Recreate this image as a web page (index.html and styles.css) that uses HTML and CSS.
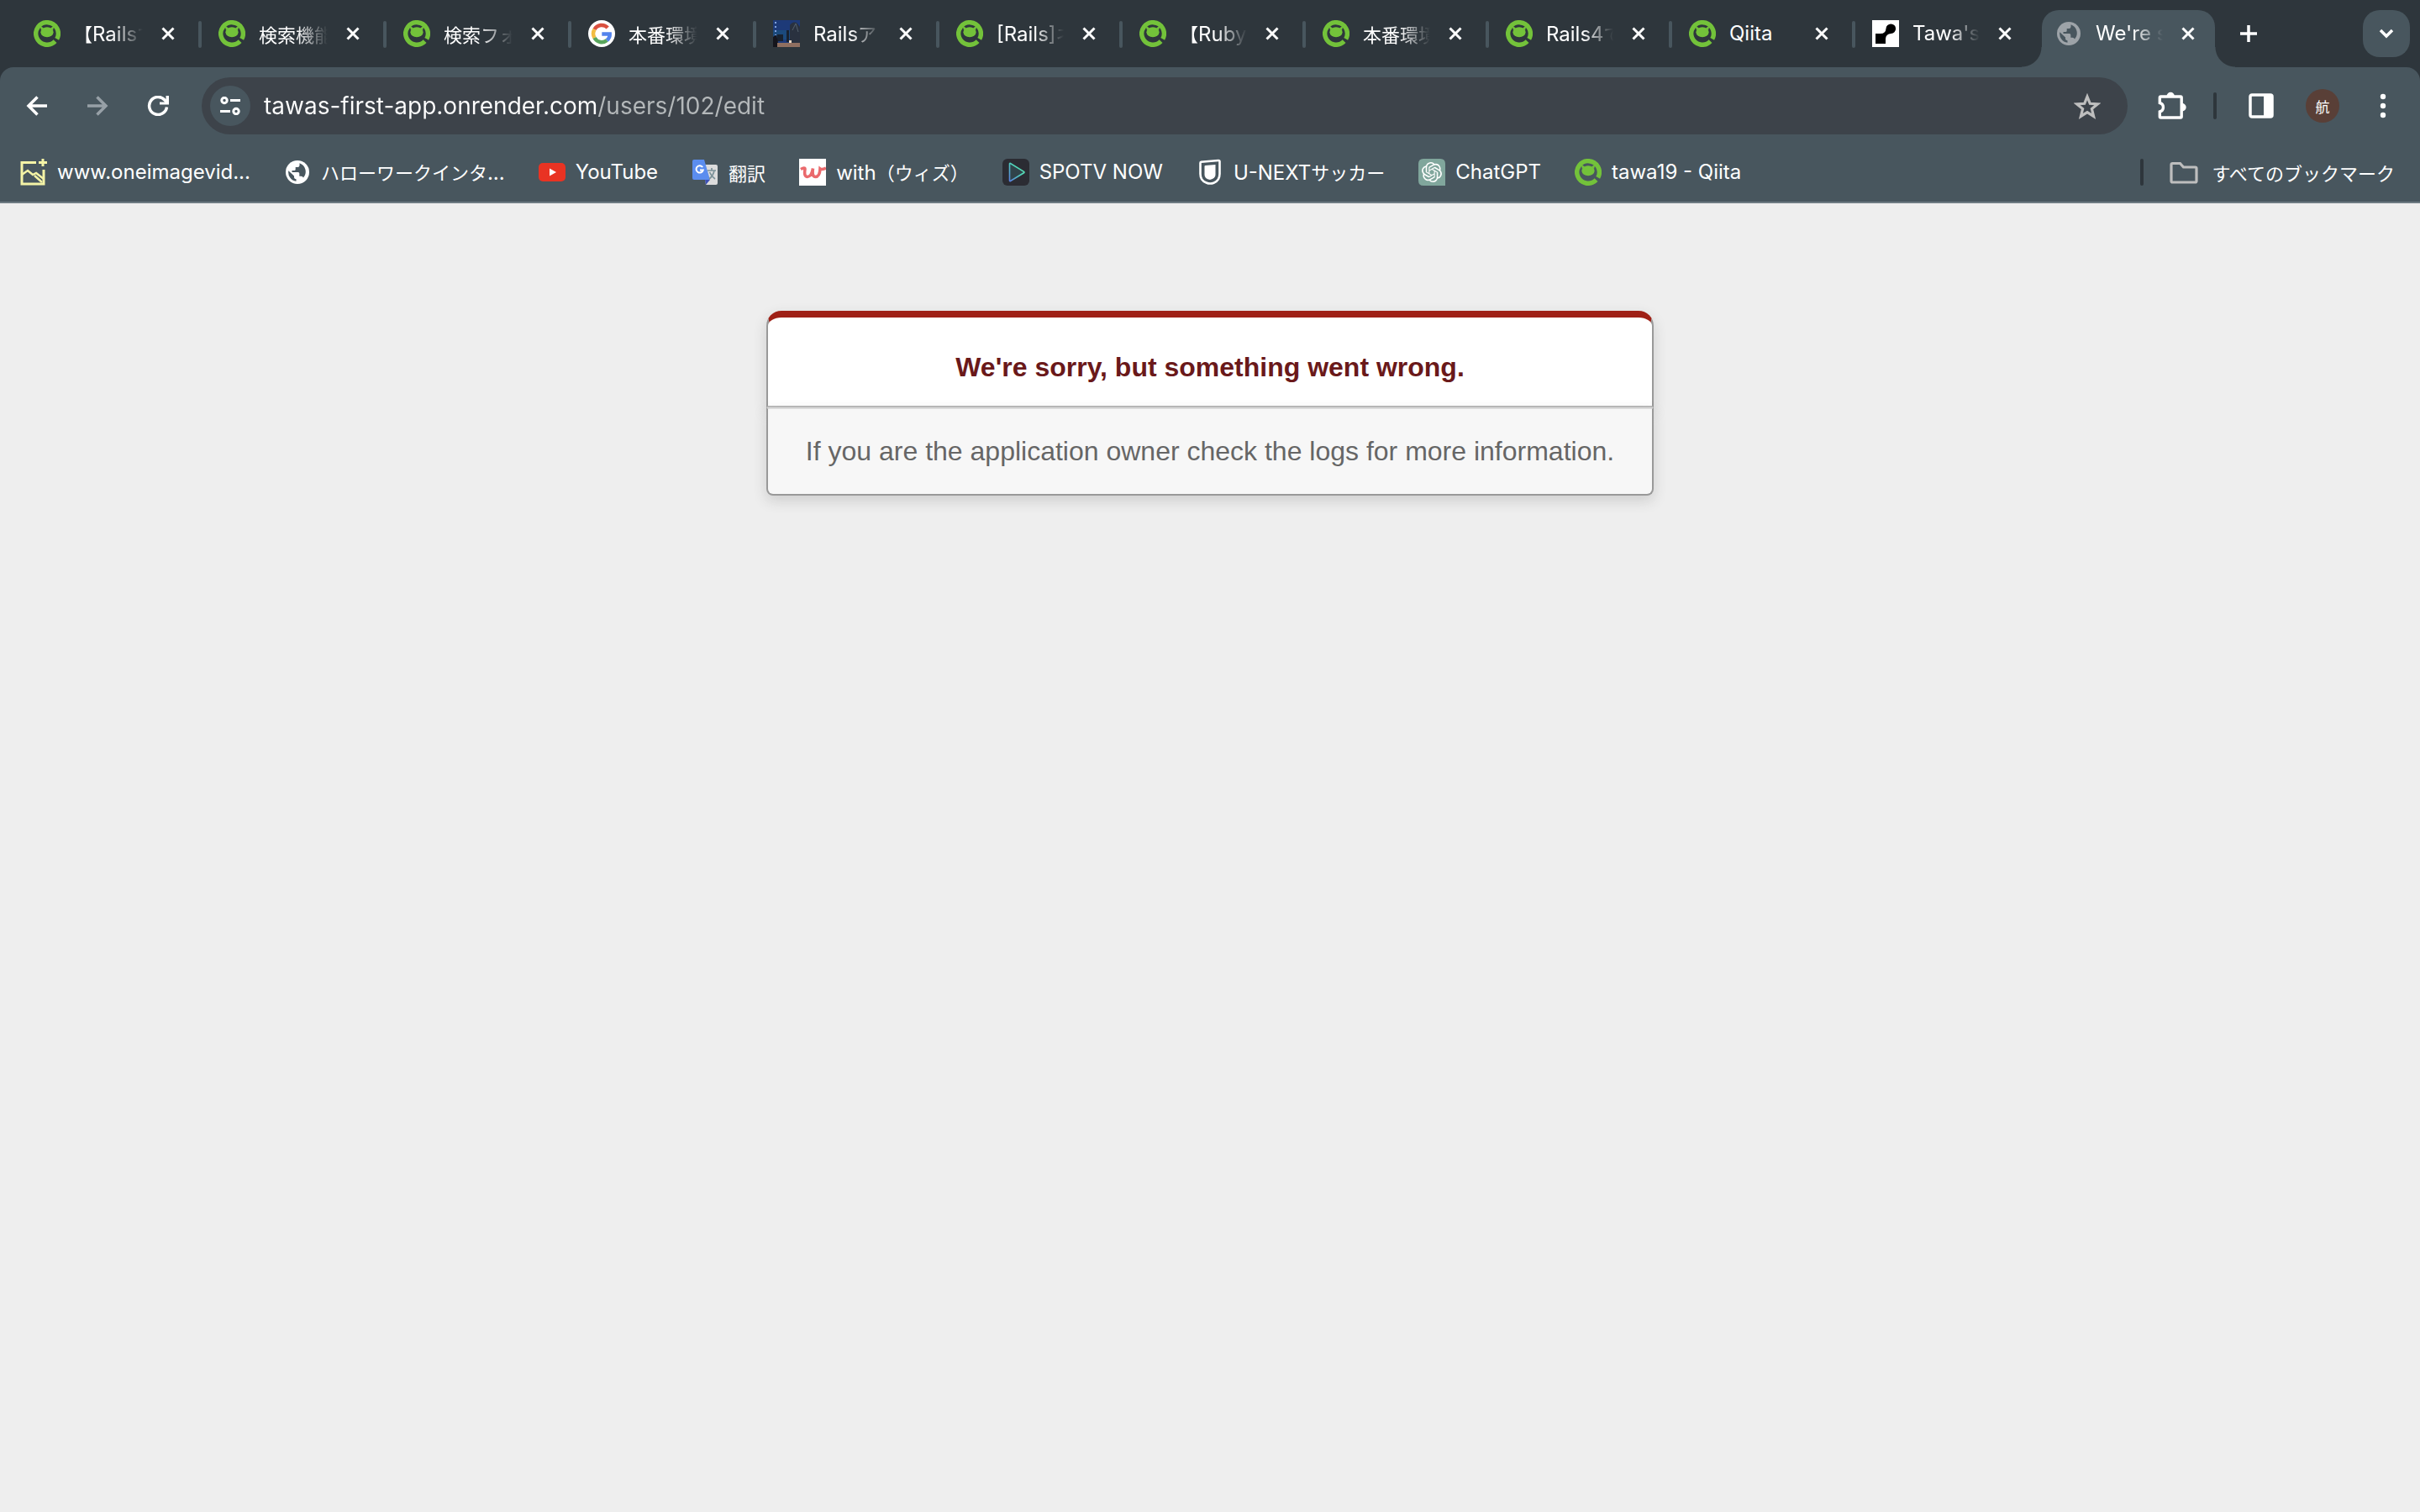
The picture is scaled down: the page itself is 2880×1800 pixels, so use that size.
FILE: index.html
```html
<!DOCTYPE html>
<html lang="en">
<head>
<meta charset="UTF-8">
<meta name="viewport" content="width=device-width, initial-scale=1">
<title>We're sorry, but something went wrong (500)</title>
<link rel="stylesheet" href="styles.css">
</head>
<body>

<svg class="defs" aria-hidden="true">
  <linearGradient id="spotv-line" x1="0" y1="1" x2="1" y2="0">
    <stop offset="0" stop-color="#5b7fe0"/><stop offset=".6" stop-color="#4fd8b8"/><stop offset="1" stop-color="#6be8b0"/>
  </linearGradient>
  <symbol id="qiita" viewBox="0 0 32 32">
    <path d="M27.700 22.350A13.300 13.300 0 1 0 25.600 25.200" fill="none" stroke="#73c23a" stroke-width="5.400"/>
    <ellipse cx="16" cy="14.200" rx="7.600" ry="6" fill="#73c23a"/>
    <path d="M7.500 6.500l4.500 3-3 2.500zM24.500 6.500l-4.500 3 3 2.500z" fill="#73c23a"/>
  </symbol>
  <symbol id="close" viewBox="0 0 16 16"><path d="M1.500 1.500l13 13m0-13l-13 13" stroke="#fff" stroke-width="3"/></symbol>
  <symbol id="globe" viewBox="0 0 28 28">
    <circle cx="14" cy="14" r="14" fill="currentColor"/>
    <path class="land" d="M16.500 3.200v2.600q0 2.200-2.200 2.200h-2.600v2.500q0 1.500-1.500 1.500H7.500v2h7.300q1.500 0 1.500 1.600v3.200h2q2 0 2.700 1.800a10.800 10.800 0 0 0-4.500-17.400zM3.300 12.200a10.800 10.800 0 0 0 9.200 12.500v-2.500q-2.500 0-2.500-2.600v-1.200z"/>
  </symbol>
</svg>

<header class="browser">
  <div class="tab-strip">
    <div class="tab"><button class="tab-main"><svg class="icon"><use href="#qiita"/></svg><span class="tab-title"><span lang="ja">【</span>Rails<span lang="ja">で</span></span></button><button class="close" aria-label="Close"><svg><use href="#close"/></svg></button></div>
    <div class="tab"><button class="tab-main"><svg class="icon"><use href="#qiita"/></svg><span class="tab-title" lang="ja">検索機能</span></button><button class="close" aria-label="Close"><svg><use href="#close"/></svg></button></div>
    <div class="tab"><button class="tab-main"><svg class="icon"><use href="#qiita"/></svg><span class="tab-title" lang="ja">検索フォ</span></button><button class="close" aria-label="Close"><svg><use href="#close"/></svg></button></div>
    <div class="tab"><button class="tab-main"><svg class="icon" viewBox="0 0 32 32"><circle cx="16" cy="16" r="16" fill="#fff"/><g fill="none" stroke-width="4.500"><path d="M23.200 9A9.800 9.800 0 0 0 7.500 11" stroke="#d9503f"/><path d="M7.500 11a9.800 9.800 0 0 0 0 10" stroke="#f2bd42"/><path d="M7.500 21a9.800 9.800 0 0 0 14.800 3" stroke="#58a55c"/><path d="M22.300 24q3.700-3 3.400-7.500H16.300" stroke="#5383ec"/></g></svg><span class="tab-title" lang="ja">本番環境</span></button><button class="close" aria-label="Close"><svg><use href="#close"/></svg></button></div>
    <div class="tab"><button class="tab-main"><svg class="icon" viewBox="0 0 32 32"><path d="M0 0h32v32H0z" fill="#1d3a78"/><path d="M0 12h32v11H0z" fill="#1b4a7c"/><path d="M20 32V6q3-5 8-3l4 5v24z" fill="#29313f"/><path d="M16 12h3v14h-3zM5 17h7v8H5z" fill="#18222f"/><path d="M0 20l4-3 3 15H0z" fill="#15151c"/><path d="M5 27h27v5H5z" fill="#8f6f60"/><path d="M19 24h3v3h-3z" fill="#e8d8c4"/><path d="M3 2v16" stroke="#7fa0dc" stroke-width="2" stroke-dasharray="2 3"/><path d="M23 12l4-8 3 10" fill="none" stroke="#53606c" stroke-width="1"/></svg><span class="tab-title">Rails<span lang="ja">ア</span></span></button><button class="close" aria-label="Close"><svg><use href="#close"/></svg></button></div>
    <div class="tab"><button class="tab-main"><svg class="icon"><use href="#qiita"/></svg><span class="tab-title">[Rails]<span lang="ja">ネ</span></span></button><button class="close" aria-label="Close"><svg><use href="#close"/></svg></button></div>
    <div class="tab"><button class="tab-main"><svg class="icon"><use href="#qiita"/></svg><span class="tab-title"><span lang="ja">【</span>Ruby</span></button><button class="close" aria-label="Close"><svg><use href="#close"/></svg></button></div>
    <div class="tab"><button class="tab-main"><svg class="icon"><use href="#qiita"/></svg><span class="tab-title" lang="ja">本番環境</span></button><button class="close" aria-label="Close"><svg><use href="#close"/></svg></button></div>
    <div class="tab"><button class="tab-main"><svg class="icon"><use href="#qiita"/></svg><span class="tab-title">Rails4<span lang="ja">で</span></span></button><button class="close" aria-label="Close"><svg><use href="#close"/></svg></button></div>
    <div class="tab"><button class="tab-main"><svg class="icon"><use href="#qiita"/></svg><span class="tab-title short">Qiita</span></button><button class="close" aria-label="Close"><svg><use href="#close"/></svg></button></div>
    <div class="tab last"><button class="tab-main"><svg class="icon" viewBox="0 0 32 32"><path d="M0 0h32v32H0z" fill="#fff"/><path d="M4 28V16h6q6 0 6.500-6a5.800 5.800 0 1 1 6 6q-6 .5-6.500 6v6z"/></svg><span class="tab-title">Tawa's</span></button><button class="close" aria-label="Close"><svg><use href="#close"/></svg></button></div>
    <div class="tab active"><button class="tab-main"><svg class="icon globe"><use href="#globe" x="2" y="2" width="28" height="28"/></svg><span class="tab-title">We're s</span></button><button class="close" aria-label="Close"><svg><use href="#close"/></svg></button></div>
    <button class="new-tab" aria-label="New tab"><svg width="20" height="20"><path d="M10 0v20M0 10h20" stroke="#fff" stroke-width="3.500"/></svg></button>
    <button class="tab-search" aria-label="Search tabs"><svg width="18" height="12"><path d="M2 2l7 7 7-7" fill="none" stroke="#fff" stroke-width="3.500"/></svg></button>
  </div>

  <div class="toolbar">
    <nav class="nav-buttons">
      <button aria-label="Back"><svg viewBox="0 0 26 24"><path d="M13.500 1.500L3 12l10.500 10.500M3 12h22" fill="none" stroke="#fff" stroke-width="3.500"/></svg></button>
      <button aria-label="Forward"><svg viewBox="0 0 26 24"><path d="M12.500 1.500L23 12 12.500 22.500M23 12H1" fill="none" stroke="#97a0a7" stroke-width="3.500"/></svg></button>
      <button aria-label="Reload"><svg viewBox="0 0 26 24"><path d="M23.500 13.500A10.500 10.500 0 1 1 21 5L24 8.500" fill="none" stroke="#fff" stroke-width="3.500"/><path d="M26 0v10.500H15V7.500h7.500V0z" fill="#fff"/></svg></button>
    </nav>
    <form class="omnibox">
      <button type="button" class="site-info" aria-label="Site information"><svg width="24" height="22" fill="none" stroke="#fff" stroke-width="3"><circle cx="5" cy="4.500" r="3.200"/><circle cx="19" cy="17.500" r="3.200"/><path d="M12 4.500h12M0 17.500h12"/></svg></button>
      <input class="url" type="text" aria-label="Address" value="tawas-first-app.onrender.com/users/102/edit">
      <button type="button" class="star" aria-label="Bookmark this tab"><svg width="32" height="31" viewBox="0 0 32 31"><path d="M16 4l3.300 8.300 9 .6-6.900 5.700 2.200 8.800L16 22.600l-7.600 4.800 2.200-8.800-6.900-5.700 9-.6z" fill="none" stroke="#bebebe" stroke-width="3.200"/></svg></button>
    </form>
    <div class="tools">
      <button aria-label="Extensions"><svg width="34" height="34" viewBox="0 0 34 34"><path d="M3.500 6h23.500q1.200 0 1.200 1.200v22.600q0 1.200-1.200 1.200H3.500q-1.200 0-1.200-1.200V24a5.400 5.400 0 0 0 0-10.500V7.200Q2.300 6 3.500 6z" fill="none" stroke="#fff" stroke-width="3.400"/><path d="M10.500 5.500a4.700 4.700 0 0 1 9.400 0zM29 14a4.700 4.700 0 0 1 0 9.400z" fill="#fff"/></svg></button>
      <i class="divider"></i>
      <button aria-label="Side panel"><svg width="30" height="30"><rect x="2" y="2" width="26" height="26" rx="2" fill="none" stroke="#fff" stroke-width="3.500"/><path d="M18 2h10v26H18z" fill="#fff"/></svg></button>
      <button class="avatar" lang="ja">航</button>
      <button aria-label="Menu"><svg width="8" height="30" fill="#fff"><circle cx="4" cy="4" r="3.200"/><circle cx="4" cy="15" r="3.200"/><circle cx="4" cy="26" r="3.200"/></svg></button>
    </div>
  </div>

  <nav class="bookmarks">
    <a href="#"><svg class="icon" viewBox="0 0 32 32" fill="none" stroke="#f4f3a6" stroke-width="3"><path d="M19 4.500H2V30h26V13"/><path d="M2 19l7-5 6 5 4-2 9 7M17 20l9 8" stroke-width="2.500"/><path d="M27 0v9M22 4.500h10"/></svg><span>www.oneimagevid...</span></a>
    <a href="#"><svg class="icon globe"><use href="#globe" x="2" y="2" width="28" height="28"/></svg><span><span lang="ja">ハローワークインタ</span>...</span></a>
    <a href="#"><svg class="icon" viewBox="0 0 32 32"><rect y="5" width="32" height="22" rx="5" fill="#e93323"/><path d="M13 11.500v9l8-4.500z" fill="#fff"/></svg><span>YouTube</span></a>
    <a href="#"><svg class="icon" viewBox="0 0 32 32"><path d="M14 7h15q2 0 2 2v20q0 2-2 2H17z" fill="#dcdcdc"/><path d="M16 25h6l-5 6z" fill="#3c50b5"/><path d="M3 1h12l7 24H3q-2 0-2-2V3q0-2 2-2z" fill="#5b8def"/><path d="M13.200 10a4.200 4.200 0 1 0 .6 3.500H10" fill="none" stroke="#fff" stroke-width="2"/><path d="M19 14h10M24 11v3M27 14q-1 6-6 10M21.500 16q2 5 6.500 8" fill="none" stroke="#7c9299" stroke-width="1.700"/></svg><span lang="ja">翻訳</span></a>
    <a href="#"><svg class="icon" viewBox="0 0 32 32"><path d="M0 0h32v32H0z" fill="#fff"/><path d="M2 12.500q5-3 5 0-1.500 9 3 9 4.500 0 6.500-10-1.500 10 3 10 5 0 5.500-9.500 2 1.500 7-1" fill="none" stroke="#ea6a6d" stroke-width="3.600"/></svg><span>with<span lang="ja">（ウィズ）</span></span></a>
    <a href="#"><svg class="icon" viewBox="0 0 32 32"><rect width="32" height="32" rx="6" fill="#2b2c33"/><path d="M8.500 6v20q0 1 1 .5l16-9.700q1-.8 0-1.500L9.500 5.500q-1-.3-1 .5z" fill="#30434a" stroke="url(#spotv-line)" stroke-width="1.600"/></svg><span>SPOTV NOW</span></a>
    <a href="#"><svg class="icon" viewBox="0 0 32 32"><path d="M4.500 5q0-1 1-1.200L26 2q1.500 0 1.500 1.300V18q0 8-7 10.700Q16 30.500 11.500 28.500 4.500 26 4.500 18z" fill="none" stroke="#fff" stroke-width="2.600"/><path d="M9.500 9q0-.8 1-1l12-1v12q0 4.500-6.500 6-6.500-1-6.500-6z" fill="#fff"/></svg><span>U-NEXT<span lang="ja">サッカー</span></span></a>
    <a href="#"><svg class="icon" viewBox="0 0 32 32"><path d="M6 0h20q6 0 6 6v26H6q-6 0-6-6V6q0-6 6-6z" fill="#80a69c"/><path transform="translate(4 4)" fill="#fff" d="M22.282 9.821a5.985 5.985 0 0 0-.516-4.910 6.046 6.046 0 0 0-6.510-2.900A6.065 6.065 0 0 0 4.981 4.182a5.985 5.985 0 0 0-3.998 2.900 6.046 6.046 0 0 0 .743 7.097 5.980 5.980 0 0 0 .511 4.911 6.051 6.051 0 0 0 6.515 2.900A5.985 5.985 0 0 0 13.260 24a6.056 6.056 0 0 0 5.772-4.206 5.989 5.989 0 0 0 3.998-2.900 6.056 6.056 0 0 0-.748-7.073zm-9.022 12.608a4.476 4.476 0 0 1-2.876-1.041l.142-.080 4.778-2.758a.795.795 0 0 0 .393-.681v-6.737l2.020 1.169a.071.071 0 0 1 .038.052v5.583a4.504 4.504 0 0 1-4.495 4.494zm-9.661-4.125a4.471 4.471 0 0 1-.535-3.014l.142.085 4.783 2.758a.771.771 0 0 0 .781 0l5.843-3.369v2.332a.080.080 0 0 1-.033.062L9.740 19.950a4.499 4.499 0 0 1-6.141-1.646zM2.341 7.896a4.485 4.485 0 0 1 2.366-1.973V11.600a.766.766 0 0 0 .388.677l5.814 3.354-2.020 1.169a.076.076 0 0 1-.071 0l-4.830-2.787A4.504 4.504 0 0 1 2.341 7.872zm16.596 3.856L13.104 8.364 15.119 7.200a.076.076 0 0 1 .071 0l4.830 2.791a4.494 4.494 0 0 1-.677 8.104v-5.677a.790.790 0 0 0-.407-.667zm2.011-3.023l-.142-.085-4.774-2.782a.776.776 0 0 0-.785 0L9.409 9.230V6.897a.066.066 0 0 1 .028-.062l4.830-2.787a4.499 4.499 0 0 1 6.680 4.660zM8.307 12.863l-2.020-1.164a.080.080 0 0 1-.038-.057V6.074a4.499 4.499 0 0 1 7.376-3.454l-.142.081L8.704 5.459a.795.795 0 0 0-.393.681zm1.098-2.365l2.602-1.500 2.607 1.500v2.999l-2.597 1.500-2.607-1.500z"/></svg><span>ChatGPT</span></a>
    <a href="#"><svg class="icon"><use href="#qiita"/></svg><span>tawa19 - Qiita</span></a>
    <div class="all-bookmarks">
      <i class="divider"></i>
      <a href="#"><svg width="34" height="32" viewBox="0 0 34 32"><path d="M3.500 5.500h9l4 4.500h14q1.500 0 1.500 1.500v15q0 1.500-1.500 1.500h-27Q2 28 2 26.500V7q0-1.500 1.500-1.500z" fill="none" stroke="#bebebe" stroke-width="3.200"/></svg><span lang="ja">すべてのブックマーク</span></a>
    </div>
  </nav>
</header>

<main class="page">
  <div class="dialog">
    <h1>We're sorry, but something went wrong.</h1>
    <p>If you are the application owner check the logs for more information.</p>
  </div>
</main>

</body>
</html>
```
FILE: styles.css
```css
* { box-sizing: border-box; }
body { min-height: 100vh; margin: 0; background: #eee; color: #fff; font-family: Inter, "Noto Sans CJK JP", sans-serif; }
button { display: flex; align-items: center; justify-content: center; margin: 0; padding: 0; border: 0; background: none; color: inherit; font: inherit; cursor: pointer; }
a { color: inherit; text-decoration: none; }
svg { display: block; flex: none; }
.defs { position: absolute; width: 0; height: 0; }
.icon { width: 32px; height: 32px; }
.divider { width: 4px; height: 32px; border-radius: 2px; background: #2e363c; }

.browser { background: #2e363c; font-size: 24px; font-weight: 400; }
[lang=ja] { font-family: "Noto Sans CJK JP", sans-serif; font-size: 22px; }

/* tabs */
.tab-strip { display: flex; height: 80px; padding: 0 12px 0 20px; }
.tab { position: relative; display: flex; align-items: center; flex: 0 1 218px; min-width: 0; padding: 0 30px 0 20px; }
.tab:nth-child(-n+4) { flex-basis: 220px; }
.tab::after { content: ""; position: absolute; right: 0; top: 25px; width: 4px; height: 32px; border-radius: 2px; background: #48565e; }
.tab.last::after { display: none; }
.tab-main { flex: 1; min-width: 0; gap: 16px; justify-content: flex-start; }
.tab-title { flex: 1; min-width: 0; overflow: hidden; white-space: nowrap; text-align: left; line-height: 36px; -webkit-mask-image: linear-gradient(90deg, #000 55%, transparent); mask-image: linear-gradient(90deg, #000 55%, transparent); }
.tab-title.short { -webkit-mask-image: none; mask-image: none; }
.close { width: 20px; height: 20px; margin-left: 20px; }
.close svg { width: 16px; height: 16px; }

.tab.active { z-index: 0; }
.tab.active::before { content: ""; position: absolute; z-index: -1; left: 4px; right: 8px; top: 12px; bottom: 0; border-radius: 20px 20px 0 0; background: #48565e; }
.tab.active::after { z-index: -1; left: -20px; right: -16px; top: auto; bottom: 0; width: auto; height: 24px; border-radius: 0;
  background: radial-gradient(circle at 0 0, transparent 23px, #48565e 24px) left / 24px 24px no-repeat, radial-gradient(circle at 100% 0, transparent 23px, #48565e 24px) right / 24px 24px no-repeat; }
.globe { color: #fff; }
.tab .globe { color: #9da3a8; }
.land { fill: #48565e; }
.new-tab { width: 56px; margin-left: 4px; }
.tab-search { width: 56px; height: 56px; margin: 12px 0 0 auto; border-radius: 20px; background: #48565e; }

/* address bar */
.toolbar { display: flex; align-items: center; height: 92px; padding: 0 40px 0 31px; border-radius: 16px 16px 0 0; background: #48565e; }
.nav-buttons { display: flex; gap: 46px; width: 209px; }
.nav-buttons svg { width: 26px; height: 24px; }
.omnibox { display: flex; align-items: center; flex: 1; height: 68px; padding: 0 32px 0 10px; border-radius: 34px; background: #3d434a; }
.site-info { width: 48px; height: 48px; border-radius: 50%; background: #48565e; }
/* host in white, path greyed out */
.url { flex: 1; min-width: 0; margin-left: 16px; padding: 0; border: 0; outline: 0; font: 400 28px/40px Inter, sans-serif; color: transparent; background: linear-gradient(90deg, #fff 398px, #b4b8ba 398px); -webkit-background-clip: text; background-clip: text; }
.tools { display: flex; align-items: center; gap: 38px; margin-left: 36px; }
.tools .divider { margin-left: -6px; }
.avatar { width: 40px; height: 40px; margin-right: 10px; border-radius: 50%; background: #593f37; font-size: 17px; }

/* bookmarks */
.bookmarks { display: flex; align-items: center; gap: 40px; height: 70px; padding: 0 30px 2px 24px; border-bottom: 2px solid #6d7a82; background: #48565e; white-space: nowrap; }
.bookmarks a { display: flex; align-items: center; gap: 12px; line-height: 36px; }
.all-bookmarks { display: flex; align-items: center; gap: 31px; margin-left: auto; }
.all-bookmarks a { gap: 16px; }

/* error page */
.page { padding: 128px 0 32px; font-family: "Liberation Sans", Arial, sans-serif; font-size: 32px; text-align: center; }
.dialog { width: 95%; max-width: 1056px; margin: 0 auto; }
.dialog h1 { margin: 0; padding: 35px 24px 22px; border: 2px solid #999; border-top: 8px solid #9f2016; border-bottom-color: #bbb; border-radius: 18px 18px 0 0; background: #fff; box-shadow: 0 6px 16px rgba(50, 50, 50, .17); color: #6a191a; font-size: 32px; line-height: 48px; }
.dialog p { margin: 0; padding: 32px 24px; border: 2px solid #999; border-top-color: #dadada; border-radius: 0 0 8px 8px; background: #f7f7f7; box-shadow: 0 6px 16px rgba(50, 50, 50, .17); color: #666; line-height: 37px; }
```
